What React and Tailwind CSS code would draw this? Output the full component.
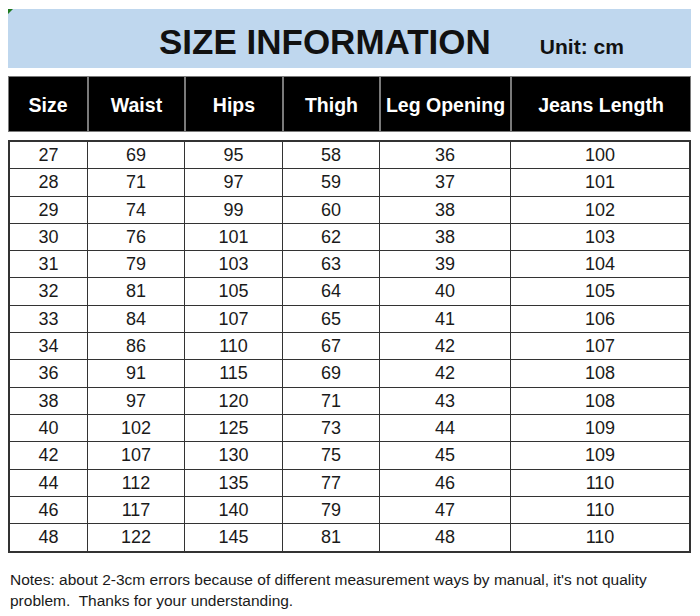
const headers = ['Size', 'Waist', 'Hips', 'Thigh', 'Leg Opening', 'Jeans Length'];

const rows = [
  [27, 69, 95, 58, 36, 100],
  [28, 71, 97, 59, 37, 101],
  [29, 74, 99, 60, 38, 102],
  [30, 76, 101, 62, 38, 103],
  [31, 79, 103, 63, 39, 104],
  [32, 81, 105, 64, 40, 105],
  [33, 84, 107, 65, 41, 106],
  [34, 86, 110, 67, 42, 107],
  [36, 91, 115, 69, 42, 108],
  [38, 97, 120, 71, 43, 108],
  [40, 102, 125, 73, 44, 109],
  [42, 107, 130, 75, 45, 109],
  [44, 112, 135, 77, 46, 110],
  [46, 117, 140, 79, 47, 110],
  [48, 122, 145, 81, 48, 110],
];

export default function App() {
  return (
    <div className="w-[700px] h-[616px] bg-white pt-[9px] pl-[8px] font-['Liberation_Sans',Arial,sans-serif] text-[#1a1a1a]">
      {/* Title band */}
      <div className="relative w-[683px] h-[59px] bg-[#bfd7ee] flex items-baseline pt-[15px]">
        <span className="absolute left-0 top-0 w-0 h-0 border-t-[5px] border-r-[5px] border-t-[#1f7a1f] border-r-transparent"></span>
        <h1 className="ml-[151px] text-[35px] leading-[35px] font-bold text-[#111]">SIZE INFORMATION</h1>
        <span className="ml-[49px] text-[21px] font-bold text-[#111]">Unit: cm</span>
      </div>

      {/* Header row */}
      <div className="mt-[8px] w-[683px] grid grid-cols-[80px_97px_98px_97px_131px_180px] bg-black">
        {headers.map((h) => (
          <div
            key={h}
            className="h-[56px] flex items-center justify-center pt-[3px] border border-[#7a7a7a] text-white font-bold text-[19.5px]"
          >
            {h}
          </div>
        ))}
      </div>

      {/* Data table */}
      <div className="mt-[8px] w-[683px] border-2 border-[#333]">
        {rows.map((r, i) => (
          <div
            key={i}
            className={
              'grid grid-cols-[78px_97px_98px_97px_131px_178px] h-[27.3px] ' +
              (i < rows.length - 1 ? 'border-b border-[#333]' : '')
            }
          >
            {r.map((v, j) => (
              <div
                key={j}
                className={
                  'flex items-center justify-center text-[18px] ' +
                  (j < r.length - 1 ? 'border-r border-[#333]' : '')
                }
              >
                {v}
              </div>
            ))}
          </div>
        ))}
      </div>

      {/* Notes */}
      <p className="mt-[16px] pl-[2px] w-[685px] text-[15.5px] leading-[21px] text-[#1a1a1a]">
        Notes: about 2-3cm errors because of different measurement ways by manual, it's not quality problem.&nbsp; Thanks for your understanding.
      </p>
    </div>
  );
}
